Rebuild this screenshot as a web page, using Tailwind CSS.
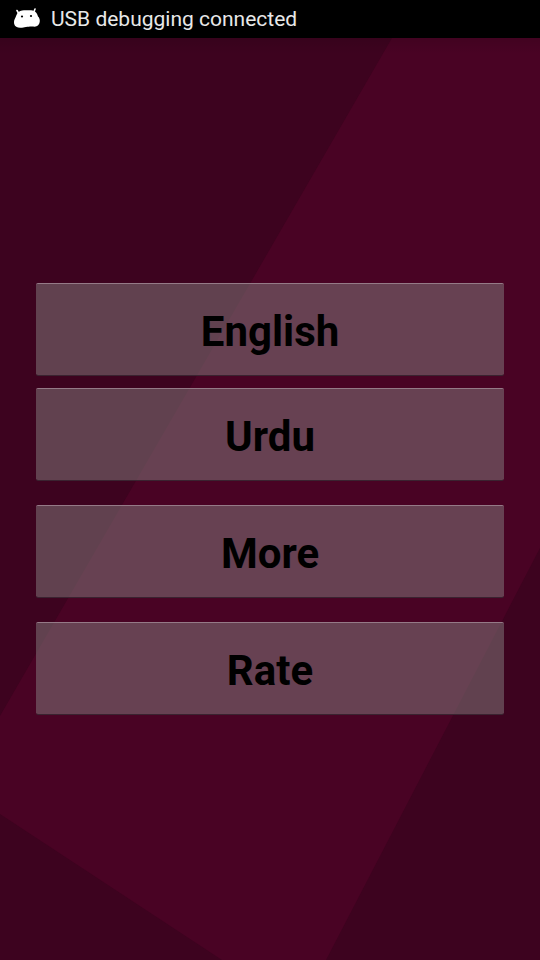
<!DOCTYPE html>
<html lang="en">
<head>
<meta charset="utf-8">
<meta name="viewport" content="width=device-width, initial-scale=1">
<title>Language</title>
<script src="https://cdn.jsdelivr.net/npm/@tailwindcss/browser@4"></script>
</head>
<body class="flex min-h-screen flex-col bg-[#490324] font-[Roboto,sans-serif]">
  <header class="flex h-[38px] items-center gap-[11px] bg-black px-[13px] text-[#e8e8e8]">
    <svg class="h-[22px] w-[27px]" viewBox="0 0 27 22" aria-hidden="true">
      <path d="M4 2.500 6 6M22 1 20.500 5" stroke="#fff" stroke-width="1.600" stroke-linecap="round"/>
      <path d="M5.500 4C8 2.500 10 2.300 13 2.300C17 2.200 20 2 22 3.500C24 5 24.500 7 25 8.500C26.800 10 27.300 13 26.300 15.500C25 18.500 22 19 19.500 18.500C17.500 18.600 16.500 18.600 14.500 18.800C12 19 11 19.500 9 19.700C5 20.300 2 19 1.200 16C.8 14 1 12 2 10.500C3 9 3.500 5.500 5.500 4Z" fill="#fff"/>
      <circle cx="9" cy="8.500" r="1.100" fill="#000"/>
      <circle cx="18" cy="8" r="1.100" fill="#000"/>
    </svg>
    <p class="text-[21px] leading-6">USB debugging connected</p>
  </header>
  <main class="relative isolate flex flex-1 flex-col justify-center px-9">
    <svg class="absolute inset-0 -z-10 h-full w-full" viewBox="0 0 540 922" preserveAspectRatio="none" aria-hidden="true">
      <path d="M0 0H392L0 678ZM0 776 222 922H0ZM540 510V922H326Z" fill="#3d031f"/>
    </svg>
    <div class="absolute inset-x-0 top-0 -z-10 h-4 bg-linear-to-b from-black/10 to-transparent"></div>
    <nav class="flex flex-col gap-6" aria-label="Menu">
      <div class="flex flex-col gap-3">
        <button type="button" class="h-[93px] rounded-[2px] border-t border-b border-t-[#957a87] border-b-[#3a2330] bg-[#868080]/50 bg-clip-padding pt-1 text-[42px] leading-[48px] font-bold text-black">English</button>
        <button type="button" class="h-[93px] rounded-[2px] border-t border-b border-t-[#957a87] border-b-[#3a2330] bg-[#868080]/50 bg-clip-padding pt-1 text-[42px] leading-[48px] font-bold text-black">Urdu</button>
      </div>
      <button type="button" class="h-[93px] rounded-[2px] border-t border-b border-t-[#957a87] border-b-[#3a2330] bg-[#868080]/50 bg-clip-padding pt-1 text-[42px] leading-[48px] font-bold text-black">More</button>
      <button type="button" class="h-[93px] rounded-[2px] border-t border-b border-t-[#957a87] border-b-[#3a2330] bg-[#868080]/50 bg-clip-padding pt-1 text-[42px] leading-[48px] font-bold text-black">Rate</button>
    </nav>
  </main>
</body>
</html>
